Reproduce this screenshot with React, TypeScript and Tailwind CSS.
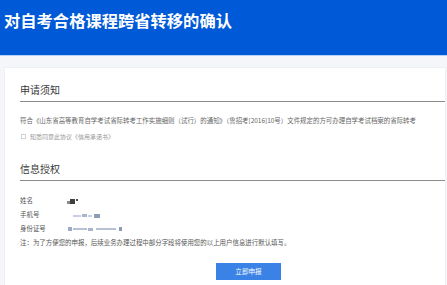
import React from "react";

const font = { fontFamily: '"Noto Sans CJK SC", "Noto Sans", sans-serif' };

function Blob({ w, h, color, ml = 0, mt = 0 }: { w: number; h: number; color: string; ml?: number; mt?: number }) {
  return (
    <span
      className="inline-block blur-[0.6px]"
      style={{ width: w, height: h, marginLeft: ml, marginTop: mt, background: color }}
    />
  );
}

export default function App() {
  return (
    <div className="w-[447px] h-[285px] overflow-hidden bg-[#f4f6fa]" style={font}>
      <div className="h-[56px] bg-[#0059d6] pl-[4px] pt-[9px] border-b border-[#b5d2f6]">
        <div className="text-white font-bold text-[16.3px] leading-[22px]">
          对自考合格课程跨省转移的确认
        </div>
      </div>
      <div className="pt-[11px] pl-[4px] pr-[1px]">
        <div className="bg-white border border-[#edf0f5] pl-[15px] h-[240px]">
          <div className="mt-[11px] h-[23px] leading-[22px] text-[10px] text-[#3a3a3a] border-b border-[#8c8c8c]">
            申请须知
          </div>
          <div className="mt-[12px] leading-[14px] text-[6.45px] text-[#666] whitespace-nowrap">
            符合《山东省高等教育自学考试省际转考工作实施细则（试行）的通知》（鲁招考[2016]10号）文件规定的方可办理自学考试档案的省际转考
          </div>
          <div className="mt-[1px] h-[14px] flex items-center text-[6px] text-[#999]">
            <span className="ml-[1px] w-[5px] h-[5px] border border-[#d2d2d2] bg-white" />
            <span className="ml-[4px]">知悉同意此协议《信用承诺书》</span>
          </div>
          <div className="mt-[15px] h-[23px] leading-[22px] text-[10px] text-[#3a3a3a] border-b border-[#8c8c8c]">
            信息授权
          </div>
          <div className="mt-[13px] text-[6.45px] text-[#555]">
            <div className="h-[14px] flex items-center">
              <span className="w-[47px]">姓名</span>
              <Blob w={3} h={3} color="#8a8a8a" mt={2} />
              <Blob w={5} h={5} color="#3e3e3e" />
              <Blob w={2} h={2} color="#555" ml={1} mt={-3} />
            </div>
            <div className="h-[14px] flex items-center">
              <span className="w-[53px]">手机号</span>
              <Blob w={8} h={2} color="#c8d0e0" mt={1} />
              <Blob w={5} h={3} color="#a9b5cc" ml={1} />
              <Blob w={4} h={2} color="#c8d0e0" ml={1} mt={1} />
              <Blob w={6} h={4} color="#8f9cb6" ml={2} mt={1} />
            </div>
            <div className="h-[14px] flex items-center">
              <span className="w-[48px]">身份证号</span>
              <Blob w={4} h={4} color="#9eabc5" />
              <Blob w={14} h={2} color="#b7c1d6" ml={1} />
              <Blob w={5} h={3} color="#a9b5cc" ml={1} />
              <Blob w={20} h={2} color="#b7c1d6" ml={3} />
              <Blob w={3} h={4} color="#8f9cb6" ml={3} />
            </div>
            <div className="h-[14px] flex items-center whitespace-nowrap">
              注：为了方便您的申报，后续业务办理过程中部分字段将使用您的以上用户信息进行默认填写。
            </div>
          </div>
          <button className="mt-[13px] ml-[196px] w-[65px] h-[17px] bg-[#3b82e6] text-white text-[6.6px] flex items-center justify-center">
            立即申报
          </button>
        </div>
      </div>
    </div>
  );
}
